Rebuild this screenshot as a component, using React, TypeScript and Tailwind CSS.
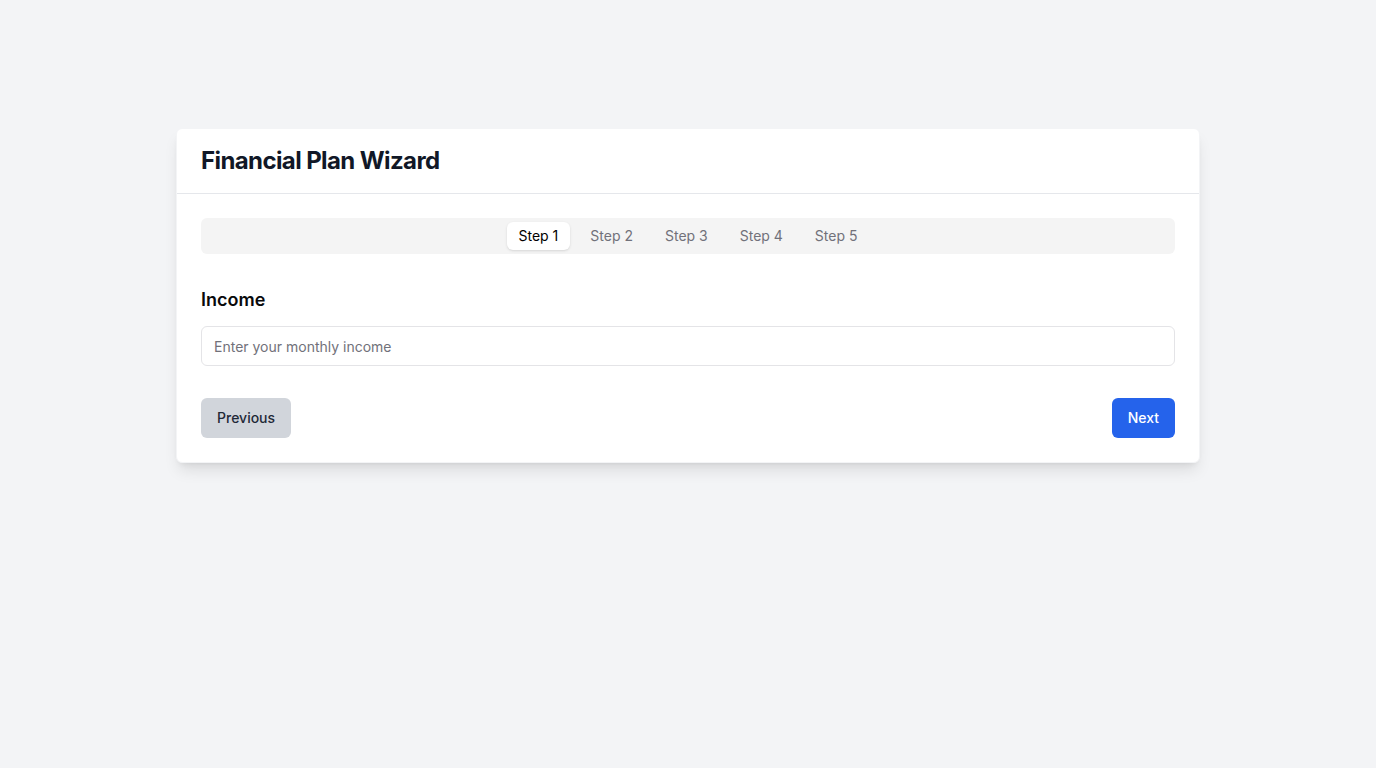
import React, { useState } from "react";

export default function App() {
  const [active, setActive] = useState(0);
  const steps = ["Step 1", "Step 2", "Step 3", "Step 4", "Step 5"];
  return (
    <div className="min-h-screen bg-[#f3f4f6] pt-32" style={{ fontFamily: "Inter, 'Noto Sans', sans-serif" }}>
      <div className="mx-auto max-w-5xl bg-white rounded-md shadow-lg border border-gray-100">
        <div className="px-6 py-4 border-b border-[#e5e7eb]">
          <h1 className="text-2xl leading-8 font-bold text-[#111827] tracking-tight">Financial Plan Wizard</h1>
        </div>
        <div className="p-6">
          <div className="h-9 w-full rounded-md bg-[#f4f4f4] flex items-center justify-center gap-2 p-1">
            {steps.map((s, i) => (
              <button
                key={s}
                onClick={() => setActive(i)}
                className={
                  i === active
                    ? "h-7 px-3 rounded-md bg-white text-sm font-normal text-black shadow-sm"
                    : "h-7 px-3 rounded-md text-sm font-normal text-[#71717a]"
                }
              >
                {s}
              </button>
            ))}
          </div>
          <h2 className="mt-8 text-lg leading-7 font-semibold text-[#09090b]">Income</h2>
          <input
            className="mt-3 h-10 w-full rounded-md border border-[#e4e4e7] px-3 text-sm text-gray-900 placeholder:text-[#71717a] outline-none"
            placeholder="Enter your monthly income"
          />
          <div className="mt-8 flex justify-between">
            <button className="h-10 px-4 rounded-md bg-[#d1d5db] text-sm font-medium text-[#1f2937]">Previous</button>
            <button className="h-10 px-4 rounded-md bg-[#2563eb] text-sm font-medium text-white">Next</button>
          </div>
        </div>
      </div>
    </div>
  );
}
